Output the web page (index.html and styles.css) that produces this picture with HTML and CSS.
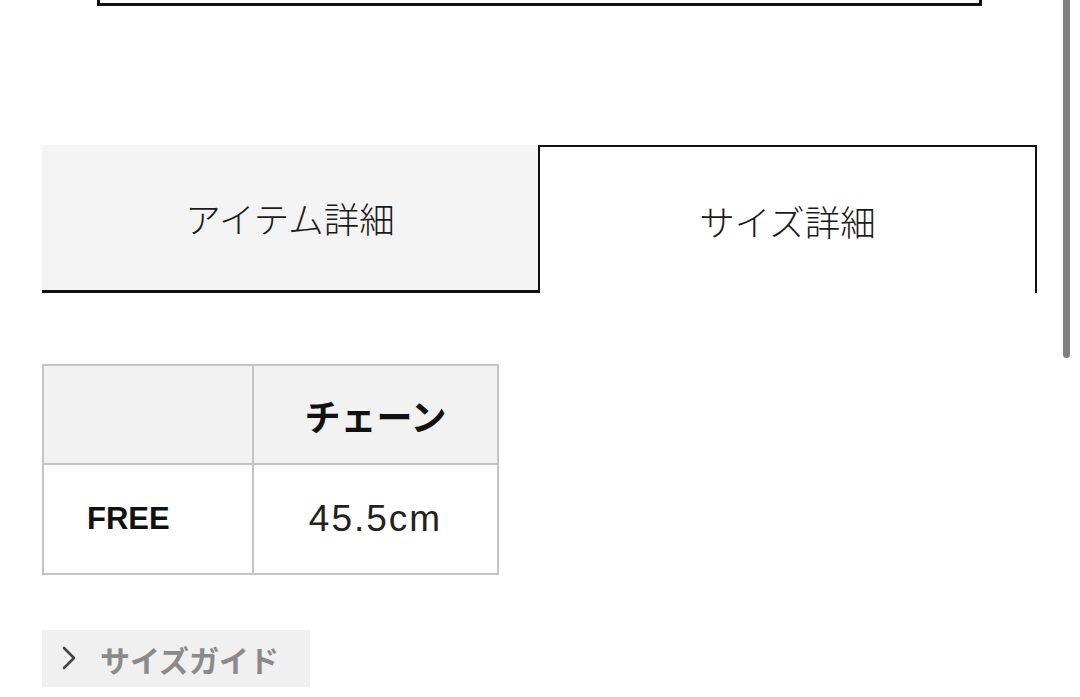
FILE: index.html
```html
<!DOCTYPE html>
<html lang="ja">
<head>
<meta charset="utf-8">
<link rel="stylesheet" href="styles.css">
</head>
<body>
<div class="page">
  <div class="top-box"></div>
  <div class="tabs">
    <div class="tab tab-inactive">アイテム詳細</div>
    <div class="tab tab-active">サイズ詳細</div>
  </div>
  <table class="size-table">
    <colgroup><col class="col1"><col class="col2"></colgroup>
    <thead>
      <tr><th></th><th class="c2">チェーン</th></tr>
    </thead>
    <tbody>
      <tr><td class="size-name">FREE</td><td class="c2 size-val">45.5cm</td></tr>
    </tbody>
  </table>
  <div class="guide">
    <svg class="chev" width="16" height="26" viewBox="0 0 16 26"><path d="M3 3 L13 13 L3 23" fill="none" stroke="#444" stroke-width="2.6" stroke-linecap="round" stroke-linejoin="round"/></svg>
    <span class="guide-text">サイズガイド</span>
  </div>
</div>
<div class="scrollbar"></div>
</body>
</html>
```
FILE: styles.css
```css
html, body {
  margin: 0;
  padding: 0;
  background: #fff;
  overflow: hidden;
}
body {
  font-family: "Liberation Sans", "Noto Sans CJK JP", sans-serif;
  color: #111;
  width: 1080px;
  height: 697px;
}
.page {
  padding-left: 42px;
  width: 995px;
}
.top-box {
  margin-left: 55px;
  width: 879px;
  height: 3px;
  border: 3px solid #111;
  border-top: none;
}
.tabs {
  display: flex;
  margin-top: 139px;
  height: 148px;
}
.tab {
  box-sizing: border-box;
  height: 148px;
  display: flex;
  align-items: center;
  justify-content: center;
  font-family: "Noto Sans CJK JP", sans-serif;
  font-size: 35.5px;
  font-weight: 300;
  color: #1a1a1a;
}
.tab-inactive {
  width: 496px;
  background: #f4f4f4;
  border-bottom: 3px solid #111;
}
.tab-active {
  width: 499px;
  background: #fff;
  border: 2.5px solid #111;
  border-bottom: none;
}
.size-table {
  margin-top: 71px;
  border-collapse: collapse;
  table-layout: fixed;
  width: 455px;
}
.col1 { width: 210px; }
.col2 { width: 245px; }
.size-table th, .size-table td {
  border: 2.5px solid #c4c4c4;
  padding: 0;
}
.size-table thead tr {
  height: 99px;
  background: #f2f2f2;
}
.size-table tbody tr {
  height: 110px;
}
.c2 {
  text-align: center;
}
th.c2 {
  font-family: "Noto Sans CJK JP", sans-serif;
  font-weight: 700;
  font-size: 36px;
  color: #111;
}
.size-name {
  padding-left: 43px !important;
  font-family: "Liberation Sans", sans-serif;
  font-weight: 700;
  font-size: 31px;
  color: #111;
}
.size-val {
  font-family: "Liberation Sans", sans-serif;
  font-size: 37px;
  letter-spacing: 2px;
  color: #222;
}
.guide {
  margin-top: 55px;
  width: 268px;
  height: 57px;
  background: #f0f0f0;
  display: flex;
  align-items: center;
  box-sizing: border-box;
  padding-left: 58px;
  position: relative;
}
.chev {
  position: absolute;
  left: 19px;
  top: 15px;
}
.guide-text {
  font-family: "Noto Sans CJK JP", sans-serif;
  font-weight: 700;
  font-size: 30px;
  color: #8a8a8a;
}
.scrollbar {
  position: fixed;
  left: 1063px;
  top: 0;
  width: 7px;
  height: 358px;
  border-radius: 0 0 4px 4px;
  background: #808080;
}
```
